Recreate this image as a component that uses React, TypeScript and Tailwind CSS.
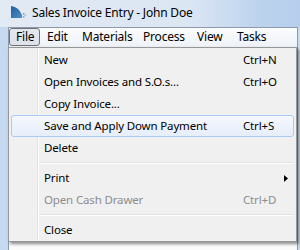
import React from "react";

type Item =
  | { kind: "item"; label: string; shortcut?: string; hl?: boolean; disabled?: boolean; submenu?: boolean }
  | { kind: "sep" };

const items: Item[] = [
  { kind: "item", label: "New", shortcut: "Ctrl+N" },
  { kind: "item", label: "Open Invoices and S.O.s...", shortcut: "Ctrl+O" },
  { kind: "item", label: "Copy Invoice..." },
  { kind: "item", label: "Save and Apply Down Payment", shortcut: "Ctrl+S", hl: true },
  { kind: "item", label: "Delete" },
  { kind: "sep" },
  { kind: "item", label: "Print", submenu: true },
  { kind: "item", label: "Open Cash Drawer", shortcut: "Ctrl+D", disabled: true },
  { kind: "sep" },
  { kind: "item", label: "Close" },
];

const menus = [
  { label: "File", w: "w-[31px]", active: true },
  { label: "Edit", w: "w-[35px]" },
  { label: "Materials", w: "w-[61px]" },
  { label: "Process", w: "w-[54px]" },
  { label: "View", w: "w-[40px]" },
  { label: "Tasks", w: "w-[45px]" },
];

function AppIcon() {
  return (
    <svg width="15" height="13" viewBox="0 0 15 13" className="shrink-0">
      <defs>
        <linearGradient id="ig" x1="0" y1="0" x2="1" y2="1">
          <stop offset="0" stopColor="#1f5f9c" />
          <stop offset="1" stopColor="#4f8fc6" />
        </linearGradient>
      </defs>
      <path d="M0 0 Q8 1 11 9 L11 12 L0 12 Z" fill="url(#ig)" />
      <rect x="12" y="7" width="1.5" height="1.5" fill="#6f9fc9" />
      <rect x="12" y="10" width="1.5" height="1.5" fill="#6f9fc9" />
      <rect x="13.5" y="8.5" width="1.5" height="1.5" fill="#9cbcdb" />
    </svg>
  );
}

export default function App() {
  return (
    <div className="relative w-[300px] h-[250px] overflow-hidden bg-[#c3d7ee] text-[11.5px] tracking-[-0.15px] text-black font-['Segoe_UI','Noto_Sans',sans-serif] leading-none">
      {/* Title bar */}
      <div className="h-[27px] flex items-center pl-[11px] bg-[linear-gradient(to_right,#e2eaf4_0px,#dbe6f3_190px,#bcd3ee_260px,#b7cfec_300px)]">
        <div className="mt-[-2px]">
          <AppIcon />
        </div>
        <span className="ml-[6px] mt-[-2px] text-[12px] tracking-[-0.2px]">Sales Invoice Entry - John Doe</span>
      </div>

      {/* Window body */}
      <div className="flex h-[223px]">
        <div className="w-[8px] bg-[#c5d9f0]" />
        <div className="flex-1 flex flex-col border-l border-[#8a99ac]">
          <div className="h-[20px] border-t border-[#8e9aab] bg-[linear-gradient(to_bottom,#fbfcfd,#eef2f7)] flex items-stretch text-[12px] tracking-[-0.2px]">
            {menus.map((m) => (
              <div
                key={m.label}
                className={`${m.w} h-[18px] flex items-center pl-[6px] ${
                  m.active ? "border border-[#6f7379] rounded-[3px] bg-[linear-gradient(to_bottom,#e4e8ee,#dde2ea)]" : "border border-transparent"
                }`}
              >
                {m.label}
              </div>
            ))}
          </div>
          <div className="flex-1 bg-[#fbfbfb]" />
        </div>
        <div className="w-[3px] bg-[#c9dbef] border-l border-[#8a99ac]" />
      </div>

      {/* Dropdown menu */}
      <div className="absolute left-[8px] top-[47px] w-[289px] border border-[#979797] pt-[1px] shadow-[2px_2px_3px_rgba(0,0,0,0.45)] bg-[linear-gradient(to_right,#f0f0f0_28px,#e2e3e3_28px,#e2e3e3_29px,#ffffff_29px,#ffffff_30px,#f0f0f0_30px)]">
        {items.map((it, i) =>
          it.kind === "sep" ? (
            <div key={i} className="h-[8px] flex flex-col justify-center pl-[30px] pr-[3px]">
              <div className="h-[1px] bg-[#e0e0e0]" />
              <div className="h-[1px] bg-white" />
            </div>
          ) : (
            <div
              key={i}
              className={`h-[22px] mx-[2px] flex items-center rounded-[3px] border ${
                it.hl
                  ? "border-[#aecaf0] bg-[linear-gradient(to_bottom,#f5f8fd,#e5eefa)]"
                  : "border-transparent"
              } ${it.disabled ? "text-[#8d8d8d]" : "text-black"}`}
            >
              <span className="pl-[32px] w-[231px] shrink-0">{it.label}</span>
              {it.shortcut && <span>{it.shortcut}</span>}
              {it.submenu && (
                <svg width="4" height="7" viewBox="0 0 4 7" className="ml-[41px]">
                  <path d="M0 0 L4 3.5 L0 7 Z" fill="#000" />
                </svg>
              )}
            </div>
          )
        )}
      </div>
    </div>
  );
}
